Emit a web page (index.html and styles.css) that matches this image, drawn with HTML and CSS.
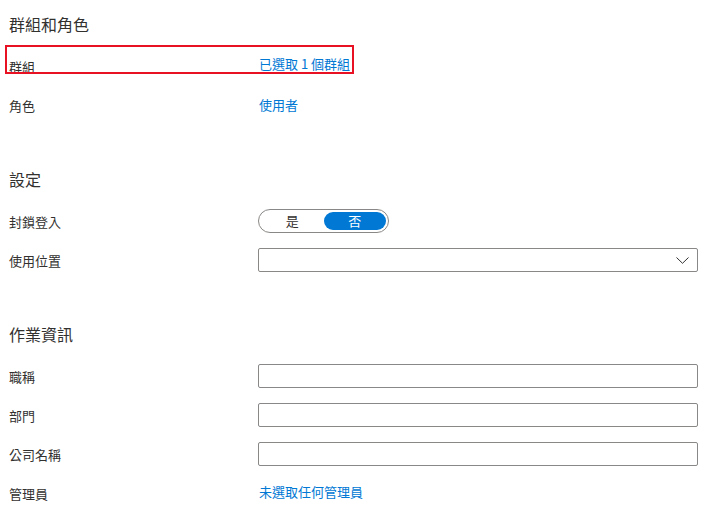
FILE: index.html
```html
<!DOCTYPE html>
<html lang="zh-Hant">
<head>
<meta charset="utf-8">
<link rel="stylesheet" href="styles.css">
</head>
<body>
<div class="page">
  <section class="section">
    <h2 class="heading first">群組和角色</h2>
    <div class="row row-first">
      <div class="label">群組</div>
      <div class="value"><a class="link link-up">已選取 1 個群組</a></div>
      <div class="highlight"></div>
    </div>
    <div class="row">
      <div class="label">角色</div>
      <div class="value"><a class="link">使用者</a></div>
    </div>
  </section>

  <section class="section">
    <h2 class="heading">設定</h2>
    <div class="row row-first">
      <div class="label">封鎖登入</div>
      <div class="value">
        <div class="toggle">
          <span class="opt">是</span>
          <span class="opt on">否</span>
        </div>
      </div>
    </div>
    <div class="row">
      <div class="label">使用位置</div>
      <div class="value">
        <div class="select">
          <svg class="chev" width="13" height="7" viewBox="0 0 13 7"><path d="M0.5 0.5 L6.5 6.3 L12.5 0.5" fill="none" stroke="#323130" stroke-width="1"/></svg>
        </div>
      </div>
    </div>
  </section>

  <section class="section">
    <h2 class="heading">作業資訊</h2>
    <div class="row row-first">
      <div class="label">職稱</div>
      <div class="value"><div class="input"></div></div>
    </div>
    <div class="row">
      <div class="label">部門</div>
      <div class="value"><div class="input"></div></div>
    </div>
    <div class="row">
      <div class="label">公司名稱</div>
      <div class="value"><div class="input"></div></div>
    </div>
    <div class="row">
      <div class="label">管理員</div>
      <div class="value"><a class="link link-up2">未選取任何管理員</a></div>
    </div>
  </section>
</div>
</body>
</html>
```
FILE: styles.css
```css
html, body {
  margin: 0;
  padding: 0;
  background: #ffffff;
}
body {
  font-family: "Noto Sans CJK TC", "Noto Sans", sans-serif;
  color: #323130;
  font-size: 13px;
}
.page {
  padding: 0 7px 0 9px;
}
.heading {
  margin: 52px 0 0 0;
  font-size: 16px;
  line-height: 20px;
  font-weight: 400;
  color: #323130;
}
.heading.first {
  margin-top: 14px;
}
.row {
  display: flex;
  align-items: center;
  height: 24px;
  margin-top: 15px;
  position: relative;
}
.row.row-first {
  margin-top: 20px;
}
.label {
  width: 249px;
  flex: none;
  line-height: 16px;
  position: relative;
  top: 1px;
}
.value {
  flex: 1;
  display: flex;
  align-items: center;
  padding-left: 1px;
}
.link {
  color: #0078d4;
  line-height: 16px;
}
.link-up {
  position: relative;
  top: -2px;
}
.link-up2 {
  position: relative;
  top: -1px;
}
.highlight {
  position: absolute;
  left: -4px;
  top: -9px;
  width: 349px;
  height: 29px;
  box-sizing: border-box;
  border: 2px solid #e81123;
}
.toggle {
  margin-left: -1px;
  width: 131px;
  height: 24px;
  box-sizing: border-box;
  border: 1px solid #8a8886;
  border-radius: 12px;
  padding: 2px;
  display: flex;
}
.opt {
  flex: 1;
  height: 18px;
  line-height: 18px;
  text-align: center;
  border-radius: 9px;
  color: #323130;
}
.opt.on {
  background: #0078d4;
  color: #ffffff;
}
.select, .input {
  margin-left: -1px;
  flex: 1;
  height: 24px;
  box-sizing: border-box;
  border: 1px solid #8a8886;
  border-radius: 2px;
  display: flex;
  align-items: center;
  justify-content: flex-end;
}
.chev {
  margin-right: 8px;
  display: block;
}
```
